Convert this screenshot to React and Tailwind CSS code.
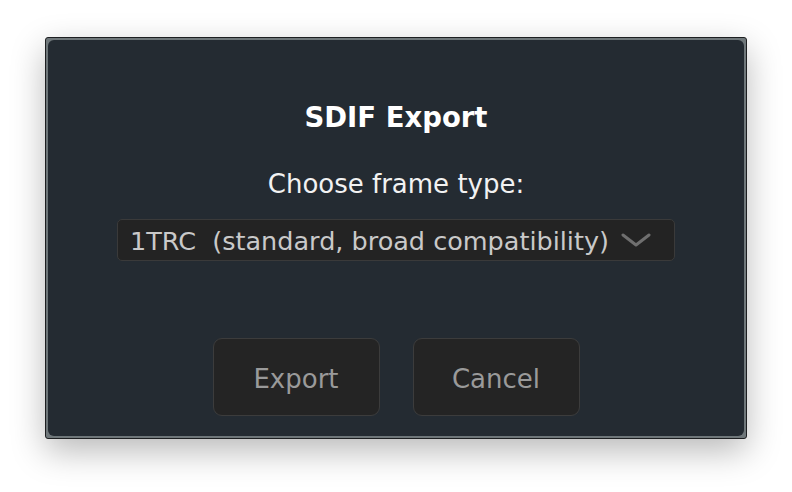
import * as React from 'react';

export default function App() {
  return (
    <div
      className="w-[792px] h-[492px] bg-white pt-[37px] pl-[45px]"
      style={{ fontFamily: '"DejaVu Sans", Verdana, sans-serif' }}
    >
      {/* window frame */}
      <div className="w-[702px] h-[402px] border border-[#1d1f21] bg-[#6f777a] rounded-[3px] pt-[2px] px-[2px] pb-[2px] shadow-[0_12px_34px_rgba(0,0,0,0.28)]">
        <div className="h-full rounded-[6px] bg-[#242b32] flex flex-col items-center">
          <div className="mt-[60px] h-[34px] leading-[34px] text-[27.5px] font-bold text-white">SDIF Export</div>

          <div className="mt-[34px] h-[32px] leading-[32px] text-[26px] text-[#f2f2f2]">Choose frame type:</div>

          <div className="mt-[19px] w-[558px] h-[42px] rounded-[5px] border border-[#3a3a3a] bg-[#232323] flex items-center justify-between pl-[12px] pr-[23px]">
            <span className="text-[25.5px] leading-[30px] pt-[1px] text-[#c9c9c9] whitespace-pre">1TRC  (standard, broad compatibility)</span>
            <svg width="30" height="14" viewBox="0 0 30 14" className="shrink-0">
              <polyline points="2,2 15,12 28,2" fill="none" stroke="#6f6f6f" strokeWidth="3" strokeLinecap="round" strokeLinejoin="round" />
            </svg>
          </div>

          <div className="mt-[77px] flex gap-[33px]">
            <button className="w-[167px] h-[78px] pt-[5px] rounded-[9px] border border-[#3c3c3c] bg-[#242424] text-[26px] text-[#9a9a9a]">
              Export
            </button>
            <button className="w-[167px] h-[78px] pt-[5px] rounded-[9px] border border-[#3c3c3c] bg-[#242424] text-[26px] text-[#9a9a9a]">
              Cancel
            </button>
          </div>
        </div>
      </div>
    </div>
  );
}
